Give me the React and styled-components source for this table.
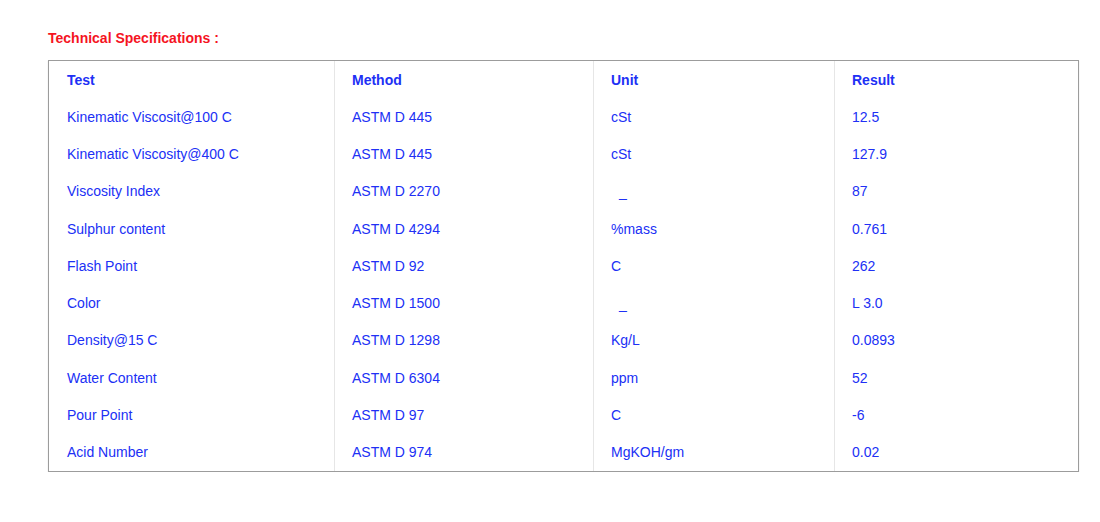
import React from "react";
import styled, { createGlobalStyle } from "styled-components";

const rows = [
	["Kinematic Viscosit@100 C", "ASTM D 445", "cSt", "12.5"],
	["Kinematic Viscosity@400 C", "ASTM D 445", "cSt", "127.9"],
	["Viscosity Index", "ASTM D 2270", "_", "87"],
	["Sulphur content", "ASTM D 4294", "%mass", "0.761"],
	["Flash Point", "ASTM D 92", "C", "262"],
	["Color", "ASTM D 1500", "_", "L 3.0"],
	["Density@15 C", "ASTM D 1298", "Kg/L", "0.0893"],
	["Water Content", "ASTM D 6304", "ppm", "52"],
	["Pour Point", "ASTM D 97", "C", "-6"],
	["Acid Number", "ASTM D 974", "MgKOH/gm", "0.02"],
];

const heads = ["Test", "Method", "Unit", "Result"];

const App = () => {
	return (
		<>
			<GlobalStyle />
			<StyledPage>
				<StyledTitle>Technical Specifications :</StyledTitle>
				<StyledTable>
					{heads.map((h) => (
						<StyledCell key={h} $head>
							{h}
						</StyledCell>
					))}
					{rows.map((row, i) =>
						row.map((value, j) => (
							<StyledCell key={i + "-" + j} $dash={value === "_"}>
								{value}
							</StyledCell>
						))
					)}
				</StyledTable>
			</StyledPage>
		</>
	);
};

const GlobalStyle = createGlobalStyle`
	body {
		margin: 0;
		background: #fff;
		font-family: "Liberation Sans", Arial, sans-serif;
	}
`;

const StyledPage = styled.div`
	padding: 29px 0 0 48px;
`;

const StyledTitle = styled.div`
	color: #f5141f;
	font-weight: 700;
	font-size: 14px;
	line-height: 18px;
	margin-bottom: 13px;
`;

const StyledTable = styled.div`
	width: 1029px;
	display: grid;
	grid-template-columns: 285px 259px 241px 1fr;
	border: 1px solid #9c9c9c;
	box-shadow: 0 1px 1px rgba(0, 0, 0, 0.18);
`;

const StyledCell = styled.div`
	height: 37.27px;
	display: flex;
	align-items: center;
	padding: ${({ $dash }) => ($dash ? "2px 0 0 25px" : "0 0 0 17px")};
	box-sizing: border-box;
	font-size: 14px;
	color: #2030f5;
	font-weight: ${({ $head }) => ($head ? 700 : 400)};
	&:nth-child(4n + 1) {
		padding-left: 18px;
	}
	&:not(:nth-child(4n + 1)) {
		border-left: 1px solid #e6e6e6;
	}
`;

export default App;
